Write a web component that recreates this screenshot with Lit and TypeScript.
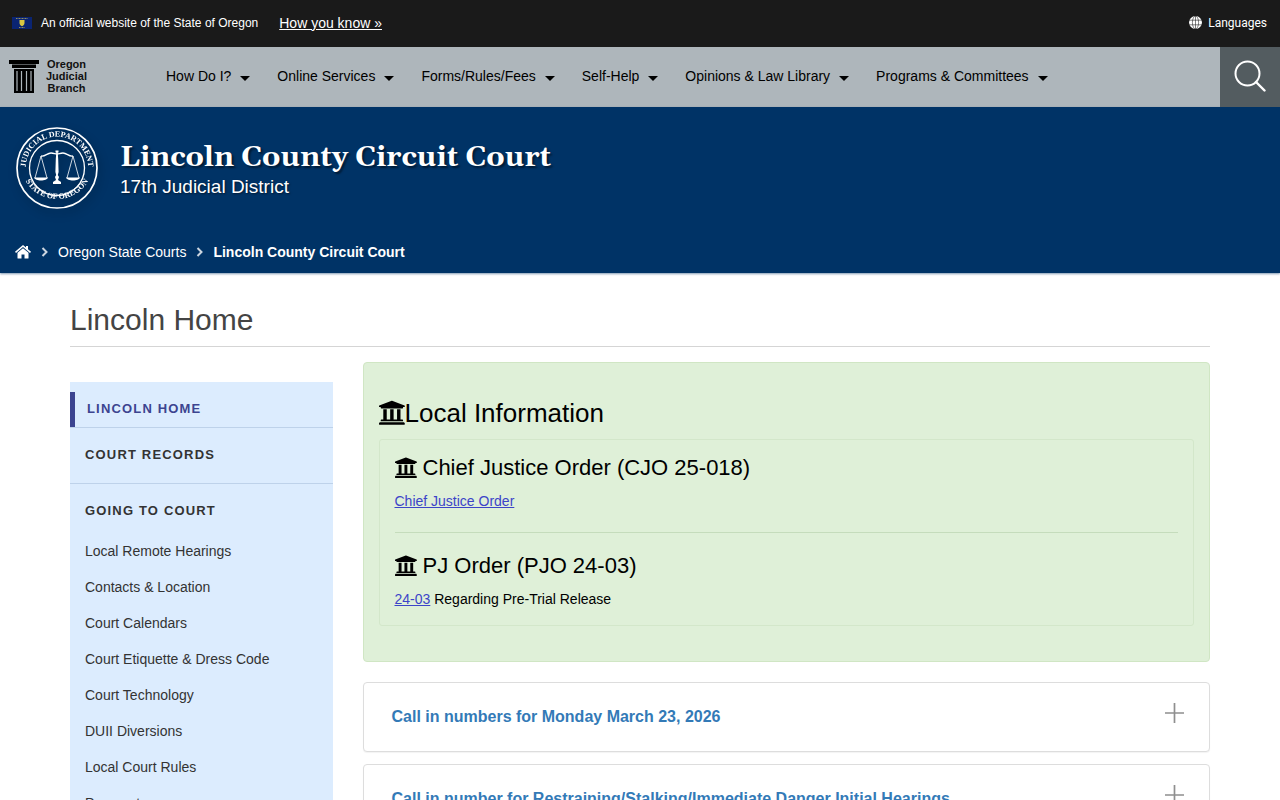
import { LitElement, html, svg, css } from "lit";
import { customElement } from "lit/decorators.js";

const NAV = [
  "How Do I?",
  "Online Services",
  "Forms/Rules/Fees",
  "Self-Help",
  "Opinions & Law Library",
  "Programs & Committees",
];

const SIDE_LINKS = [
  "Local Remote Hearings",
  "Contacts & Location",
  "Court Calendars",
  "Court Etiquette & Dress Code",
  "Court Technology",
  "DUII Diversions",
  "Local Court Rules",
  "Payments",
];

const CALLS = [
  "Call in numbers for Monday March 23, 2026",
  "Call in number for Restraining/Stalking/Immediate Danger Initial Hearings",
];

const courthouse = () => html`<svg class="courthouse" viewBox="16 20 484 484" aria-hidden="true">
  <path d="M496 128v16a8 8 0 0 1-8 8h-24v12c0 6.627-5.373 12-12 12H60c-6.627 0-12-5.373-12-12v-12H24a8 8 0 0 1-8-8v-16a8 8 0 0 1 4.941-7.392l232-88a7.996 7.996 0 0 1 6.118 0l232 88A8 8 0 0 1 496 128zm-24 304H40c-13.255 0-24 10.745-24 24v16a8 8 0 0 0 8 8h464a8 8 0 0 0 8-8v-16c0-13.255-10.745-24-24-24zM96 192v192H60c-6.627 0-12 5.373-12 12v20h416v-20c0-6.627-5.373-12-12-12h-36V192h-64v192h-64V192h-64v192h-64V192H96z" />
</svg>`;

const pan = (x: number) => svg`
  <path d="M${x} 29 ${x - 6} 51M${x} 29l6 22" stroke-width=".8" fill="none" />
  <path d="M${x - 7} 50.500h14c-1 4-13 4-14 0z" fill="#fff" stroke="none" />`;

@customElement("court-seal")
class CourtSeal extends LitElement {
  static styles = css`
    :host { display: block; }
    svg { display: block; width: 82px; height: 82px; overflow: visible; filter: drop-shadow(2px 4px 5px rgba(0, 0, 0, 0.4)); }
    text { font: bold 8px "Liberation Serif", serif; fill: #fff; stroke: none; }
  `;
  render() {
    return html`<svg viewBox="0 0 82 82" role="img" aria-label="Judicial Department, State of Oregon" fill="none" stroke="#fff">
      <defs>
        <path id="top" d="M11.500 51A31.200 31.200 0 1 1 70.500 51" />
        <path id="bottom" d="M7.500 50A36.500 36.500 0 0 0 74.500 50" />
      </defs>
      <circle cx="41" cy="41" r="40" stroke-width="1.700" />
      <circle cx="41" cy="41" r="27.500" stroke-width="1.300" />
      <text text-anchor="middle"><textPath href="#top" startOffset="50%">JUDICIAL DEPARTMENT</textPath></text>
      <text text-anchor="middle"><textPath href="#bottom" startOffset="50%">STATE OF OREGON</textPath></text>
      <path d="M25 29c4 1 6-3 10-3 3 0 4 1 6 1s3-1 6-1c4 0 6 4 10 3" stroke-width="1.300" />
      <path d="M39.500 23.500h3v2h-3zM40.400 24h1.200l.600 8 .4 13-.8 3 1.200 2-1 3 3 2v2h-8v-2l3-2-1-3 1.200-2-.8-3 .4-13z" fill="#fff" stroke="none" />
      ${pan(25)}${pan(57)}
    </svg>`;
  }
}

@customElement("app-root")
class AppRoot extends LitElement {
  static styles = css`
    :host {
      display: block;
      font: 14px/20px "Liberation Sans", Arial, sans-serif;
      color: #000;
      background: #fff;
    }
    * { box-sizing: border-box; }
    h1, h2, h3, p, ul, ol { margin: 0; padding: 0; font-weight: 400; }
    ul, ol { list-style: none; }
    a { color: inherit; text-decoration: none; }
    button { font: inherit; color: inherit; background: none; border: 0; padding: 0; cursor: pointer; }
    svg { display: block; flex: none; }

    .topbar {
      display: flex; align-items: center; height: 47px; padding: 0 13px 2px 12px;
      background: #1a1a1a; color: #fff; font-size: 12px;
    }
    .flag { width: 20px; height: 12px; margin-right: 9px; }
    .know { margin-left: 21px; font-size: 14px; text-decoration: underline; }
    .lang { display: flex; align-items: center; gap: 6px; margin-left: auto; font-family: Roboto, sans-serif; font-size: 12px; }
    .globe { width: 13px; height: 13px; }

    .nav { display: flex; height: 60px; background: #aeb6bb; }
    .brand { display: flex; align-items: center; gap: 7px; width: 150px; padding: 0 0 2px 9px; font: bold 11px/12px "Liberation Sans", Arial, sans-serif; color: #111; }
    .brand-text { text-align: center; }
    .column { width: 30px; height: 33px; }
    .menu { display: flex; align-items: center; flex: 1; }
    .menu button { display: flex; align-items: center; padding: 0 11px 2px 16px; height: 60px; }
    .caret { margin: 4px 0 0 9px; border: solid transparent; border-top-color: #000; border-width: 5px 5px 0; }
    .search { display: grid; place-items: center; width: 60px; padding-bottom: 2px; background: #535c60; }
    .search svg { width: 32px; height: 32px; }

    .banner { background: #003366; color: #fff; padding: 20px 15px 11px; box-shadow: 0 1px 2px rgba(0, 51, 102, 0.5); }
    .identity { display: flex; gap: 22px; padding-left: 1px; }
    .title { font: bold 29px/36px Georgia, Gelasio, "DejaVu Serif", serif; margin-top: 13px; text-shadow: 2px 2px 2px rgba(0, 0, 0, 0.5); }
    .district { font-size: 19px; line-height: 22px; text-shadow: 1px 1px 2px rgba(0, 0, 0, 0.5); }
    .crumbs { display: flex; align-items: center; margin-top: 33px; }
    .home { width: 16px; height: 14px; }
    .chev { width: 7px; height: 10px; margin: 0 10px; }
    .crumbs b { font-weight: bold; }

    .page { max-width: 1170px; margin: 0 auto; padding: 29px 15px 0; }
    .heading { font-size: 30px; line-height: 36px; color: #444; padding-bottom: 8px; border-bottom: 1px solid #d5d5d5; }
    .columns { display: grid; grid-template-columns: repeat(12, 1fr); gap: 30px; margin-top: 15px; }
    .side { grid-column: span 3; margin-top: 20px; padding-top: 10px; background: #dcecfe; }
    .main { grid-column: span 9; }
    .side-title { display: block; padding: 17px 15px 18px; font-size: 13px; font-weight: bold; letter-spacing: 0.09em; color: #333; border-bottom: 1px solid #bed2ea; }
    .side-title.current { padding: 7px 12px 8px; border-left: 5px solid #3c4490; color: #3c4490; border-bottom: 0; }
    .current-row { border-bottom: 1px solid #bed2ea; }
    .side-title.open { border: 0; padding-bottom: 12px; }
    .side-links li { padding: 8px 15px; color: #333; }

    .notice { padding: 35px 15px; background: #dff0d8; border: 1px solid #d0e6c4; border-radius: 4px; }
    .notice-title { display: flex; align-items: center; font-size: 26px; line-height: 30px; }
    .notice-title .courthouse { width: 26px; height: 26px; }
    .inner { margin-top: 11px; padding: 13px 15px 16px; border: 1px solid #d3e7ca; border-radius: 3px; }
    .order-title { display: flex; align-items: center; gap: 6px; font-size: 22px; line-height: 30px; }
    .order-title .courthouse { width: 22px; height: 22px; }
    .order p { margin-top: 8px; }
    .order a { color: #3c44c8; text-decoration: underline; }
    .order + .order { margin-top: 21px; padding-top: 18px; border-top: 1px solid #c5dcbc; }

    .calls { display: grid; gap: 12px; margin-top: 20px; }
    .call {
      display: flex; justify-content: space-between; width: 100%; height: 70px; padding: 20px 25px 0 28px;
      border: 1px solid #ddd; border-radius: 4px; background: #fff; box-shadow: 0 1px 1px rgba(0, 0, 0, 0.05);
      color: #337ab7; font-size: 16px; font-weight: bold; line-height: 28px; text-align: left;
    }
    .plus { width: 19px; height: 20px; }
  `;

  render() {
    return html`
      <div class="topbar">
        <svg class="flag" viewBox="0 0 20 12" aria-hidden="true">
          <path fill="#0a2472" d="M0 0h20v12H0z" />
          <path stroke="#b5ab55" stroke-width=".8" stroke-dasharray="1 .5" d="M4 1.500h12M7 10.500h6" />
          <path fill="#d9c640" d="M7.500 3h5v3c0 1.500-1.200 2.700-2.500 3.200C8.700 8.700 7.500 7.500 7.500 6z" />
        </svg>
        <span>An official website of the State of Oregon</span>
        <a class="know" href="#">How you know »</a>
        <button class="lang">
          <svg class="globe" viewBox="0 0 14 14" aria-hidden="true">
            <circle cx="7" cy="7" r="7" fill="#fff" />
            <g fill="none" stroke="#1a1a1a" stroke-width=".6"><ellipse cx="7" cy="7" rx="3.300" ry="7" /><path d="M0 4.500h14M0 9.500h14M7 0v14" /></g>
          </svg>
          Languages
        </button>
      </div>
      <nav class="nav" aria-label="Main">
        <a class="brand" href="#">
          <svg class="column" viewBox="0 0 30 33" aria-hidden="true">
            <path d="M0 0h30v4H0zM3 4.500h24v3.500H3zM5 9h20v24H5z" />
            <path d="M8 11v20M12.500 11v20M17.500 11v20M22 11v20" stroke="#aeb6bb" stroke-width="1.200" />
          </svg>
          <span class="brand-text">Oregon<br />Judicial<br />Branch</span>
        </a>
        <div class="menu">${NAV.map((n) => html`<button>${n}<span class="caret"></span></button>`)}</div>
        <button class="search" aria-label="Search">
          <svg viewBox="0 0 32 32" fill="none" stroke="#fff" stroke-width="2"><circle cx="13.500" cy="13.500" r="12" /><path d="m22 22 8.500 8.500" stroke-linecap="round" stroke-width="2.400" /></svg>
        </button>
      </nav>
      <header class="banner">
        <div class="identity">
          <court-seal></court-seal>
          <div>
            <div class="title">Lincoln County Circuit Court</div>
            <div class="district">17th Judicial District</div>
          </div>
        </div>
        <nav class="crumbs" aria-label="Breadcrumb">
          <a href="#" aria-label="Home"><svg class="home" viewBox="0 0 16 14" fill="#fff"><path d="m8 3.300 5.500 4.500V13q0 .5-.5.500H9.500v-4h-3v4H3q-.5 0-.5-.5V7.800z" /><path d="M8 0 11 2.500V1h2v3.200l3 2.500-1 1.200L8 2 1 7.900 0 6.700z" /></svg></a>
          ${this.chevron()}<a href="#">Oregon State Courts</a>${this.chevron()}<b>Lincoln County Circuit Court</b>
        </nav>
      </header>
      <main class="page">
        <h1 class="heading">Lincoln Home</h1>
        <div class="columns">
          <nav class="side" aria-label="Section">
            <div class="current-row"><a class="side-title current" href="#">LINCOLN HOME</a></div>
            <a class="side-title" href="#">COURT RECORDS</a>
            <a class="side-title open" href="#">GOING TO COURT</a>
            <ul class="side-links">${SIDE_LINKS.map((l) => html`<li><a href="#">${l}</a></li>`)}</ul>
          </nav>
          <div class="main">
            <section class="notice">
              <h2 class="notice-title">${courthouse()}Local Information</h2>
              <div class="inner">
                <div class="order">
                  <h3 class="order-title">${courthouse()}Chief Justice Order (CJO 25-018)</h3>
                  <p><a href="#">Chief Justice Order</a></p>
                </div>
                <div class="order">
                  <h3 class="order-title">${courthouse()}PJ Order (PJO 24-03)</h3>
                  <p><a href="#">24-03</a> Regarding Pre-Trial Release</p>
                </div>
              </div>
            </section>
            <div class="calls">
              ${CALLS.map((c) => html`<button class="call" aria-expanded="false"><span>${c}</span>
                <svg class="plus" viewBox="0 0 19 20" aria-hidden="true"><path d="M9.500 0v20M0 10h19" stroke="#8f8f8f" stroke-width="1.700" /></svg></button>`)}
            </div>
          </div>
        </div>
      </main>`;
  }

  private chevron() {
    return html`<svg class="chev" viewBox="0 0 7 10" aria-hidden="true"><path d="m1.500 1 4 4-4 4" fill="none" stroke="#ccd6e0" stroke-width="2" /></svg>`;
  }
}
